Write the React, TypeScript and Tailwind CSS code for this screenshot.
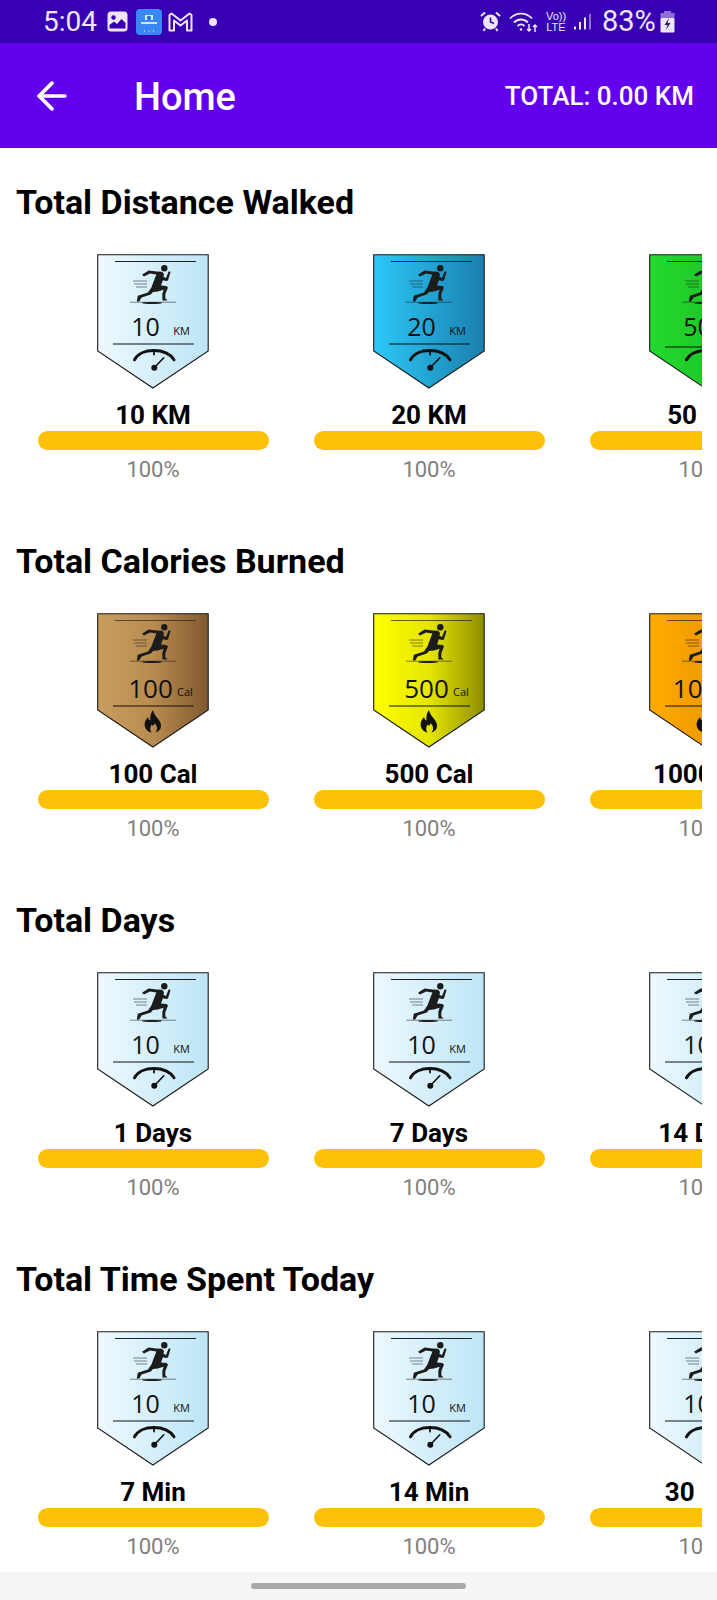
import { ArrowLeft } from 'lucide-react';

type BadgeTheme = {
  id: string;
  from: string;
  mid?: string;
  to: string;
  lineOffset: number;
};

type BadgeItem = {
  label: string;
  value: string;
  unit: 'KM' | 'Cal';
  theme: BadgeTheme;
};

const light: BadgeTheme = { id: 'light', from: '#eef9fe', to: '#bde5f6', lineOffset: 0 };
const blue: BadgeTheme = { id: 'blue', from: '#2cc9f8', to: '#1a7fae', lineOffset: 0 };
const green: BadgeTheme = { id: 'green', from: '#22da2c', to: '#20b526', lineOffset: 3 };
const brown: BadgeTheme = { id: 'brown', from: '#c99c5e', mid: '#b88b50', to: '#80592e', lineOffset: 0 };
const yellow: BadgeTheme = { id: 'yellow', from: '#ffff00', mid: '#e6e600', to: '#8e8e00', lineOffset: 0 };
const orange: BadgeTheme = { id: 'orange', from: '#ffab00', to: '#e08a00', lineOffset: 0 };

const sections: { title: string; items: BadgeItem[] }[] = [
  {
    title: 'Total Distance Walked',
    items: [
      { label: '10 KM', value: '10', unit: 'KM', theme: light },
      { label: '20 KM', value: '20', unit: 'KM', theme: blue },
      { label: '50 KM', value: '50', unit: 'KM', theme: green },
    ],
  },
  {
    title: 'Total Calories Burned',
    items: [
      { label: '100 Cal', value: '100', unit: 'Cal', theme: brown },
      { label: '500 Cal', value: '500', unit: 'Cal', theme: yellow },
      { label: '1000 Cal', value: '1000', unit: 'Cal', theme: orange },
    ],
  },
  {
    title: 'Total Days',
    items: [
      { label: '1 Days', value: '10', unit: 'KM', theme: light },
      { label: '7 Days', value: '10', unit: 'KM', theme: light },
      { label: '14 Days', value: '10', unit: 'KM', theme: light },
    ],
  },
  {
    title: 'Total Time Spent Today',
    items: [
      { label: '7 Min', value: '10', unit: 'KM', theme: light },
      { label: '14 Min', value: '10', unit: 'KM', theme: light },
      { label: '30 Min', value: '10', unit: 'KM', theme: light },
    ],
  },
];

function Runner() {
  return (
    <g fill="#1c1c1c">
      <circle cx="67.3" cy="14.3" r="3.2" />
      {/* body and limbs */}
      <path d="M59.5 17.6 L65 17.8 L67 20 L65.8 26.5 L64 31.5 L69.5 32 L71 33.6 L68.4 40 L68.3 44.2 L70.5 46.4 L65.4 46.4 L65.3 40 L66.6 35.8 L60.8 37.4 L56 38 L53.8 40.6 L44.6 43.4 L42.2 47.6 L39.8 47.6 L40.8 41.8 L51 38.6 L54.4 33.5 L57.6 25 L59.4 20.4 L53 19.4 L47 22.4 L45 20.8 L51.6 16.6 Z" />
      <path d="M65.8 22.6 L69 24 L71.6 17.4 L73.6 17.8 L71 26.6 L69 27 L65 26 Z" />
      <g stroke="#1c1c1c" strokeWidth="0.7" opacity="0.75">
        <path d="M36 27 H50 M37 30 H50 M39 33 H50" />
        <path d="M33 48.2 H79" />
      </g>
      <ellipse cx="55" cy="49" rx="10" ry="1" />
    </g>
  );
}

function Gauge() {
  return (
    <g fill="none" stroke="#111" strokeLinecap="round">
      <path d="M37.5 105.8 C44 93.5 69 93.5 77 105.8" strokeWidth="3" />
      <path d="M57 96 V100.5" strokeWidth="1.8" />
      <path d="M58 113 L66.8 103.8" strokeWidth="1.6" />
      <circle cx="57.3" cy="113.8" r="3" fill="#111" stroke="none" />
    </g>
  );
}

function Flame() {
  return (
    <path
      fill="#111"
      fillRule="evenodd"
      d="M56 97 C57 102 60 104 62.5 108 C65.5 112.5 64 118 58.5 119.5 C61 116.5 60.5 113 57.5 110 C57.5 112.5 55.5 113.5 54.5 111.5 C53 114.5 52.5 117 54.5 119.5 C49.5 118.5 46.5 114 48 109 C48.5 107 50 105.5 51 104 C51.5 106 52 107 53.5 107.5 C53 104 53.5 100 56 97 Z"
    />
  );
}

function Badge({ item, uid }: { item: BadgeItem; uid: string }) {
  const { theme, unit, value } = item;
  const isCal = unit === 'Cal';
  const gradId = `grad-${uid}`;
  const lineY = isCal ? 93 : 90 + theme.lineOffset;
  return (
    <svg width="112" height="136" viewBox="0 0 112 136" className="block shrink-0">
      <defs>
        <linearGradient id={gradId} x1="0" y1="0" x2="1" y2="0">
          <stop offset="0" stopColor={theme.from} />
          {theme.mid && <stop offset="0.5" stopColor={theme.mid} />}
          <stop offset="1" stopColor={theme.to} />
        </linearGradient>
      </defs>
      <path d="M0.7 0.7 H111.2 V97 L55.9 134 L0.7 97 Z" fill={`url(#${gradId})`} stroke="#1a1a1a" strokeWidth="1.1" />
      <path d="M18 7.5 H99" stroke="#222" strokeWidth={isCal ? 0.7 : 1} />
      <Runner />
      <text
        x={isCal ? 53.5 : 48.5}
        y={isCal ? 85 : 82}
        textAnchor="middle"
        fontFamily="'Open Sans', sans-serif"
        fontSize={isCal ? 26 : 25}
        fill="#111"
      >
        {value}
      </text>
      <text
        x={isCal ? 88 : 84.5}
        y={isCal ? 83 : 81}
        textAnchor="middle"
        fontFamily="'Open Sans', sans-serif"
        fontSize="11"
        fill="#111"
      >
        {unit}
      </text>
      <path d={`M16 ${lineY} H97`} stroke="#111" strokeWidth="1" />
      {isCal ? <Flame /> : <Gauge />}
    </svg>
  );
}

function StatusBar() {
  return (
    <div className="h-[43px] bg-[#3700b3] flex items-center pl-[43px] pr-[42px] text-[#efe6fb]">
      <span className="text-[28px] leading-none w-[55px]">5:04</span>
      {/* gallery */}
      <svg width="21" height="21" viewBox="0 0 21 21" className="ml-[9px]">
        <rect x="0.5" y="0.5" width="20" height="20" rx="3.5" fill="#efe6fb" />
        <circle cx="6.5" cy="6.5" r="2.2" fill="#3700b3" />
        <path d="M2.5 17.5 V14 L7 10.5 L10 13 L14.5 8 L18.5 12 V17.5 Z" fill="#3700b3" />
      </svg>
      {/* app icon */}
      <svg width="26" height="26" viewBox="0 0 26 26" className="ml-[8px]">
        <rect width="26" height="26" rx="4" fill="#3b86f5" />
        <path d="M9 6 H17 V11 H9 Z" fill="#d9ecff" />
        <rect x="11" y="7" width="4" height="4" rx="1" fill="#2e6fd8" />
        <rect x="5" y="13" width="16" height="2" fill="#cfe4ff" />
        <path d="M8 22 h1 M12.5 22 h1 M17 22 h1" stroke="#fff" strokeWidth="1" />
      </svg>
      {/* gmail outline */}
      <svg width="25" height="20" viewBox="0 0 25 20" className="ml-[6px]" fill="none" stroke="#efe6fb" strokeWidth="2">
        <path d="M1.5 18.5 V3 L3.5 1.5 L12.5 8.5 L21.5 1.5 L23.5 3 V18.5 H19 V8.5 L12.5 13.5 L6 8.5 V18.5 Z" strokeLinejoin="round" />
      </svg>
      <span className="ml-[16px] w-2 h-2 rounded-full bg-[#efe6fb]" />
      <div className="ml-auto flex items-center">
        {/* alarm */}
        <svg width="21" height="21" viewBox="0 0 21 21">
          <circle cx="10.5" cy="11" r="7.5" fill="#efe6fb" />
          <path d="M10.5 6.5 V11 L14 12.5" stroke="#3700b3" strokeWidth="1.6" fill="none" />
          <path d="M1 5 L5 1.5 M20 5 L16 1.5 M5 17.5 L3.5 20 M16 17.5 L17.5 20" stroke="#efe6fb" strokeWidth="2" />
        </svg>
        {/* wifi */}
        <svg width="30" height="22" viewBox="0 0 30 22" className="ml-[8px]" fill="none" stroke="#efe6fb" strokeWidth="1.8">
          <path d="M1 7.5 C7 1 17 1 23 7.5" />
          <path d="M5 11.5 C9 7.5 15 7.5 19 11.5" />
          <path d="M8.5 15 C10.5 13 13.5 13 15.5 15" />
          <circle cx="12" cy="18.5" r="1.2" fill="#efe6fb" stroke="none" />
          <path d="M20 13 V20 M18 18 L20 20 L22 18 M26 21 V14 M24 16 L26 14 L28 16" strokeWidth="1.5" />
        </svg>
        <div className="ml-[7px] w-[20px] flex flex-col items-center font-['Liberation_Sans',sans-serif] text-[11px] leading-[11px] font-medium">
          <span>Vo))</span>
          <span>LTE</span>
        </div>
        {/* signal */}
        <svg width="18" height="16" viewBox="0 0 18 16" className="ml-[8px]">
          <rect x="0" y="12.5" width="2" height="3" fill="#efe6fb" />
          <rect x="5" y="8" width="2" height="7.5" fill="#efe6fb" />
          <rect x="10" y="3.5" width="2" height="12" fill="#efe6fb" />
          <rect x="15" y="0" width="2" height="15.5" fill="#8d6fd6" />
        </svg>
        <span className="ml-[10px] text-[29px] leading-none w-[57px]">83%</span>
        {/* battery */}
        <svg width="15" height="22" viewBox="0 0 15 22" className="ml-[1px]">
          <rect x="4" y="0" width="7" height="3" fill="#8d6fd6" />
          <rect x="0.5" y="2" width="14" height="5" fill="#8d6fd6" />
          <rect x="0.5" y="7" width="14" height="14.5" rx="1" fill="#efe6fb" />
          <path d="M9 7 L4.5 14 H7.5 L6 19 L10.5 12 H7.5 Z" fill="#2b1a55" />
        </svg>
      </div>
    </div>
  );
}

function BadgeCard({ item, uid }: { item: BadgeItem; uid: string }) {
  return (
    <div className="w-[276px] shrink-0 flex flex-col items-center">
      <Badge item={item} uid={uid} />
      <p className="mt-[11px] text-[26px] leading-[28px] font-bold text-black whitespace-nowrap">{item.label}</p>
      <div className="mt-[2px] w-[231px] h-[19px] rounded-full bg-[#ffc107]" />
      <p className="mt-[7px] text-[22px] leading-[26px] text-[#808080]">100%</p>
    </div>
  );
}

export default function App() {
  return (
    <div className="w-[717px] h-[1600px] bg-white flex flex-col overflow-hidden font-['Roboto',sans-serif]">
      <StatusBar />

      <header className="h-[105px] bg-[#6200ee] flex items-center text-white">
        <ArrowLeft className="ml-[30px] w-[44px] h-[44px]" strokeWidth={2} />
        <h1 className="ml-[60px] pt-[3px] text-[38px] leading-none font-medium">Home</h1>
        <span className="ml-auto mr-[23px] pt-[1px] text-[26px] leading-none font-medium">TOTAL: 0.00 KM</span>
      </header>

      <main className="flex-1 overflow-hidden flex flex-col gap-[60px] pt-[36px]">
        {sections.map((section, s) => (
          <section key={section.title}>
            <h2 className="px-4 text-[34px] leading-[36px] font-bold text-black">{section.title}</h2>
            <div className="mt-[34px] ml-[15px] w-[687px] overflow-hidden flex">
              {section.items.map((item, i) => (
                <BadgeCard key={item.label} item={item} uid={`${s}-${i}`} />
              ))}
            </div>
          </section>
        ))}
      </main>

      <div className="h-[28px] bg-[#f5f5f7] flex justify-center pt-[11px]">
        <div className="w-[215px] h-[6px] rounded-full bg-[#a9a9ab]" />
      </div>
    </div>
  );
}
